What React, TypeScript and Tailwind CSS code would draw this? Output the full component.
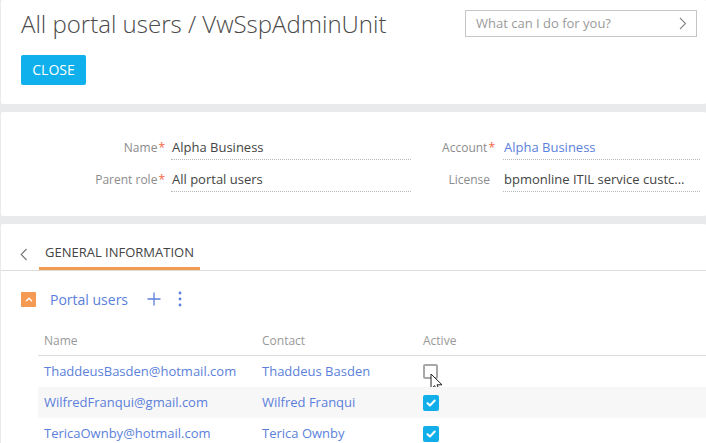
import React from "react";

const LINK = "text-[#5b7fdb]";

function Field({ label, req, value, labelW, valueW, gap, link }: { label: string; req?: boolean; value: string; labelW: string; valueW: string; gap: string; link?: boolean }) {
  return (
    <div className="flex items-stretch h-[24px]">
      <div className={`${labelW} flex items-center justify-end text-[12px] text-[#8c8c8c]`}>
        <span>{label}</span>
        {req ? <span className="text-[#f2643f] ml-[1px]">*</span> : <span className="w-[5px]" />}
      </div>
      <div className={`${gap}`} />
      <div className={`${valueW} flex items-center border-b border-dotted border-[#b8b8b8] text-[13px] pl-[1px] whitespace-nowrap overflow-hidden ${link ? LINK : "text-[#444]"}`}>
        {value}
      </div>
    </div>
  );
}

function Check({ checked }: { checked: boolean }) {
  if (!checked)
    return <div className="w-[15px] h-[15px] rounded-[2px] border-[2px] border-[#a7a7a7] bg-white" />;
  return (
    <div className="w-[16px] h-[16px] rounded-[2px] bg-[#12aeea] flex items-center justify-center">
      <svg width="10" height="8" viewBox="0 0 10 8">
        <path d="M1.5 4.2 L4 6.5 L8.7 1.5" fill="none" stroke="white" strokeWidth="2" strokeLinecap="round" strokeLinejoin="round" />
      </svg>
    </div>
  );
}

const rows = [
  { email: "ThaddeusBasden@hotmail.com", contact: "Thaddeus Basden", active: false },
  { email: "WilfredFranqui@gmail.com", contact: "Wilfred Franqui", active: true },
  { email: "TericaOwnby@hotmail.com", contact: "Terica Ownby", active: true },
];

export default function App() {
  return (
    <div className="w-[706px] h-[443px] overflow-hidden bg-[#e8eaeb] pl-[1px] flex flex-col gap-[8px]" style={{ fontFamily: '"Open Sans", "Liberation Sans", sans-serif' }}>
      {/* Header panel */}
      <div className="h-[104px] shrink-0 bg-white rounded-[2px] flex justify-between">
        <div className="pl-[20px] pt-[8px] flex flex-col items-start">
          <div className="text-[24px] leading-[32px] font-light text-[#4a4a4a] whitespace-nowrap">All portal users / VwSspAdminUnit</div>
          <button className="mt-[15px] h-[30px] w-[65px] rounded-[2px] bg-[#0fb0ec] text-white text-[14px] leading-[30px]">CLOSE</button>
        </div>
        <div className="mt-[10px] mr-[9px] w-[232px] h-[27px] border border-[#c6c6c6] flex items-center justify-between pl-[10px] pr-[9px]">
          <span className="text-[13px] text-[#9a9a9a]">What can I do for you?</span>
          <svg width="8" height="13" viewBox="0 0 8 13">
            <path d="M1 1 L6.5 6.5 L1 12" fill="none" stroke="#888" strokeWidth="1.1" />
          </svg>
        </div>
      </div>

      {/* Fields panel */}
      <div className="h-[104px] shrink-0 bg-white rounded-[2px] pt-[24px] flex flex-col gap-[8px]">
        <div className="flex">
          <Field label="Name" req value="Alpha Business" labelW="w-[164px]" valueW="w-[240px]" gap="w-[6px]" />
          <Field label="Account" req value="Alpha Business" labelW="w-[84px]" valueW="w-[197px]" gap="w-[8px]" link />
        </div>
        <div className="flex">
          <Field label="Parent role" req value="All portal users" labelW="w-[164px]" valueW="w-[240px]" gap="w-[6px]" />
          <Field label="License" value="bpmonline ITIL service custc..." labelW="w-[84px]" valueW="w-[197px]" gap="w-[8px]" />
        </div>
      </div>

      {/* Detail panel */}
      <div className="flex-1 bg-white rounded-[2px] flex flex-col">
        <div className="h-[47px] shrink-0 border-b border-[#dcdcdc] flex items-stretch">
          <div className="pl-[19px] pt-[14px] flex items-center">
            <svg width="8" height="13" viewBox="0 0 8 13">
              <path d="M6.5 1 L1.2 6.5 L6.5 12" fill="none" stroke="#777" strokeWidth="1.1" />
            </svg>
          </div>
          <div className="ml-[11px] px-[6px] pt-[15px] border-b-[3px] border-[#f39a52] flex items-center text-[13px] text-[#444] whitespace-nowrap">
            GENERAL INFORMATION
          </div>
        </div>

        <div className="mt-[16px] h-[24px] flex items-center pl-[20px]">
          <div className="w-[15px] h-[15px] bg-[#f59a52] rounded-[1px] flex items-center justify-center">
            <svg width="8" height="5" viewBox="0 0 8 5">
              <path d="M1 4.2 L4 1.2 L7 4.2" fill="none" stroke="white" strokeWidth="1.3" />
            </svg>
          </div>
          <span className={`ml-[14px] text-[14px] ${LINK}`}>Portal users</span>
          <svg className="ml-[19px]" width="14" height="14" viewBox="0 0 14 14">
            <path d="M7 0.5 V13.5 M0.5 7 H13.5" stroke="#5b7fdb" strokeWidth="1.3" />
          </svg>
          <svg className="ml-[17px]" width="4" height="16" viewBox="0 0 4 16">
            <circle cx="2" cy="2" r="1.4" fill="#5b7fdb" />
            <circle cx="2" cy="8" r="1.4" fill="#5b7fdb" />
            <circle cx="2" cy="14" r="1.4" fill="#5b7fdb" />
          </svg>
        </div>

        <div className="ml-[37px] flex flex-col">
          <div className="h-[45px] flex items-end pb-[5px] border-b border-[#dcdcdc] text-[12px] leading-[18px] text-[#999]">
            <div className="w-[218px] pl-[6px]">Name</div>
            <div className="w-[161px] pl-[6px]">Contact</div>
            <div className="pl-[6px]">Active</div>
          </div>
          {rows.map((r, i) => (
            <div key={r.email} className={`relative h-[31px] flex items-center text-[13px] ${LINK} ${i === 1 ? "bg-[#f7f7f7]" : ""}`}>
              <div className="w-[218px] pl-[6px] whitespace-nowrap">{r.email}</div>
              <div className="w-[161px] pl-[6px] whitespace-nowrap">{r.contact}</div>
              <div className="pl-[6px]">
                <Check checked={r.active} />
              </div>
              {i === 0 && (
                <svg className="absolute left-[392px] top-[17px]" width="13" height="20" viewBox="0 0 13 20">
                  <path d="M1 1 L1 16 L4.6 12.6 L7.2 18.6 L9.6 17.6 L7 11.8 L12 11.8 Z" fill="white" stroke="#222" strokeWidth="1" strokeLinejoin="round" />
                </svg>
              )}
            </div>
          ))}
        </div>
      </div>
    </div>
  );
}
